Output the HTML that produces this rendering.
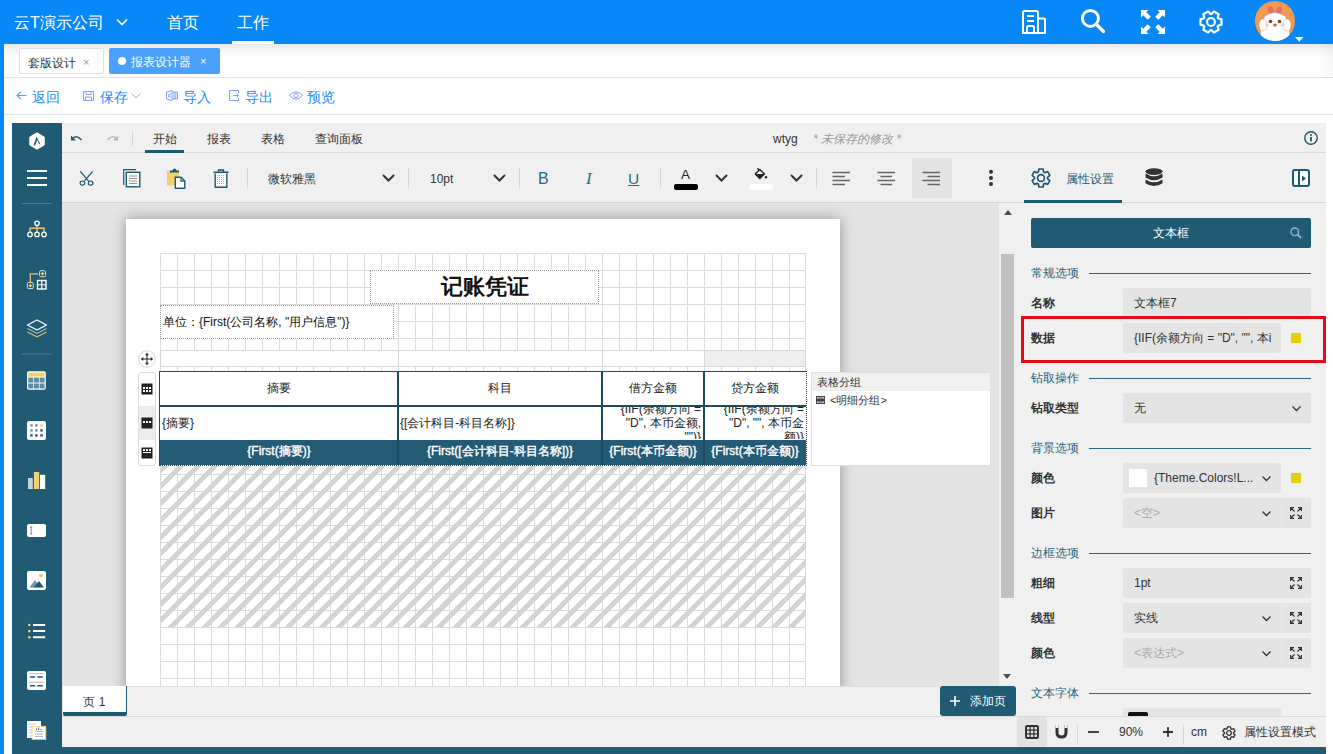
<!DOCTYPE html>
<html><head><meta charset="utf-8">
<style>
*{box-sizing:border-box;margin:0;padding:0}
html,body{width:1333px;height:754px;overflow:hidden;background:#fff;font-family:"Liberation Sans",sans-serif;position:relative}
.a{position:absolute;white-space:nowrap}
svg{position:absolute;overflow:visible}
#hdr{left:0;top:0;width:1333px;height:44px;background:#0888f7;color:#fff}
#lstrip{left:0;top:44px;width:4px;height:710px;background:#0888f7}
#tabbar{left:4px;top:44px;width:1329px;height:34px;background:#fff;border-bottom:1px solid #dfe3ea}
#tabbar:before{content:"";position:absolute;left:0;top:0;right:0;height:14px;background:linear-gradient(rgba(0,0,0,0.09),rgba(0,0,0,0.03) 45%,rgba(0,0,0,0))}
#tabbar:after{content:"";position:absolute;right:0;top:0;width:14px;height:80px;background:linear-gradient(to left,rgba(0,0,0,0.035),rgba(0,0,0,0));-webkit-mask-image:linear-gradient(#000 30%,transparent)}
#actbar{left:4px;top:78px;width:1329px;height:37px;background:#fff;border-bottom:1px solid #dfe3ea}
#side{left:12px;top:123px;width:50px;height:631px;background:#205b73}
#main{left:62px;top:123px;width:1264px;height:624px;background:#f0f0f0}
#bstrip{left:12px;top:747px;width:1314px;height:7px;background:#205b73}
.ht{font-size:16px;color:#fff;top:11.5px;line-height:22px}
.tab{top:48px;height:26px;border-radius:2px;font-size:12px;line-height:28px}
.act{top:88px;font-size:14px;line-height:18px;color:#1d8cf8}
</style></head><body>
<div id="hdr" class="a">
  <div class="a ht" style="left:14px">云T演示公司</div>
  <svg style="left:116px;top:18px" width="12" height="8"><path d="M1 1.5L6 6.5L11 1.5" fill="none" stroke="#fff" stroke-width="1.6"/></svg>
  <div class="a ht" style="left:167px">首页</div>
  <div class="a ht" style="left:237px">工作</div>
  <div class="a" style="left:232px;top:41px;width:42px;height:3px;background:#fff"></div>
  <!-- building -->
  <svg style="left:1022px;top:10px" width="24" height="24" viewBox="0 0 24 24"><path d="M1 23V2.5Q1 1 2.5 1H14.5Q16 1 16 2.5V23M16 8.5H22Q23 8.5 23 9.5V23M0 23H24M5 6H12M5 11H12M5 23V17.5Q5 16 6.5 16H10.5Q12 16 12 17.5V23" fill="none" stroke="#fff" stroke-width="2"/></svg>
  <!-- search -->
  <svg style="left:1081px;top:9px" width="24" height="24" viewBox="0 0 24 24"><circle cx="9.4" cy="9.4" r="8" fill="none" stroke="#fff" stroke-width="3"/><path d="M15.5 15.5L22.5 22.5" stroke="#fff" stroke-width="3.2" stroke-linecap="round"/></svg>
  <!-- fullscreen -->
  <svg style="left:1141px;top:10px" width="24" height="24" viewBox="0 0 24 24" fill="#fff"><path d="M0 0H7.5L5.3 2.2L9.8 6.7L6.7 9.8L2.2 5.3L0 7.5Z"/><path d="M24 0H16.5L18.7 2.2L14.2 6.7L17.3 9.8L21.8 5.3L24 7.5Z"/><path d="M0 24H7.5L5.3 21.8L9.8 17.3L6.7 14.2L2.2 18.7L0 16.5Z"/><path d="M24 24H16.5L18.7 21.8L14.2 17.3L17.3 14.2L21.8 18.7L24 16.5Z"/></svg>
  <!-- gear -->
  <svg style="left:1199px;top:10px" width="24" height="24" viewBox="0 0 24 24"><path d="M19.14 8.40 L22.50 9.20 L22.50 14.80 L19.14 15.60 L18.69 16.39 L19.67 19.69 L14.83 22.49 L12.45 19.99 L11.55 19.99 L9.17 22.49 L4.33 19.69 L5.31 16.39 L4.86 15.60 L1.50 14.80 L1.50 9.20 L4.86 8.40 L5.31 7.61 L4.33 4.31 L9.17 1.51 L11.55 4.01 L12.45 4.01 L14.83 1.51 L19.67 4.31 L18.69 7.61Z" fill="none" stroke="#fff" stroke-width="2.2" stroke-linejoin="round"/><circle cx="12" cy="12" r="3.9" fill="none" stroke="#fff" stroke-width="2"/></svg>
  <!-- avatar -->
  <svg style="left:1255px;top:1px" width="40" height="40" viewBox="0 0 40 40">
    <defs><clipPath id="avc"><circle cx="20" cy="20" r="20"/></clipPath></defs>
    <g clip-path="url(#avc)">
    <rect width="40" height="40" fill="#f39a52"/>
    <ellipse cx="16" cy="9.5" rx="3" ry="4" fill="#e8706a" transform="rotate(-20 16 9.5)"/><ellipse cx="24" cy="9.5" rx="3" ry="4" fill="#e8706a" transform="rotate(20 24 9.5)"/>
    <path d="M6 44Q4 22 10 15Q20 8 30 15Q36 22 34 44Z" fill="#fff" stroke="#b08060" stroke-width="0.4"/>
    <ellipse cx="8" cy="24" rx="4" ry="6" fill="#fff" stroke="#c09070" stroke-width="0.4"/><ellipse cx="32" cy="24" rx="4" ry="6" fill="#fff" stroke="#c09070" stroke-width="0.4"/>
    <circle cx="15.5" cy="20.5" r="1.8" fill="#6a4530"/><circle cx="24.5" cy="20.5" r="1.8" fill="#6a4530"/>
    <ellipse cx="20" cy="24" rx="2" ry="1.6" fill="#e0605a"/>
    <circle cx="12" cy="24" r="1.6" fill="#f8c0c0"/><circle cx="28" cy="24" r="1.6" fill="#f8c0c0"/>
    </g>
  </svg>
  <svg style="left:1295px;top:37px" width="9" height="5"><path d="M0 0H8.5L4.25 4.8Z" fill="#fff"/></svg>
</div>
<div id="lstrip" class="a"></div>
<div id="tabbar" class="a"></div>
<div class="a tab" style="left:19px;width:85px;border:1px solid #dcdfe6;background:#fff;color:#333;padding-left:8px">套版设计<span style="position:absolute;left:63px;top:-1px;color:#999;font-size:11px">×</span></div>
<div class="a tab" style="left:109px;width:111px;background:#4aa0fb;color:#fff;padding-left:22px">报表设计器<span style="position:absolute;left:9px;top:9px;width:8px;height:8px;border-radius:50%;background:#fff"></span><span style="position:absolute;left:91px;top:-1px;font-size:11px">×</span></div>
<div id="actbar" class="a"></div>
<svg style="left:16px;top:91px" width="11" height="9" viewBox="0 0 11 9"><path d="M10.5 4.5H1M5 0.7L1 4.5L5 8.3" fill="none" stroke="#5b9cf8" stroke-width="1.1"/></svg>
<div class="a act" style="left:32px">返回</div>
<svg style="left:83px;top:91px" width="11" height="10" viewBox="0 0 11 10"><path d="M0.5 0.5H10.5V9.5H0.5Z M3 0.5V3.5H8V0.5 M2.5 9.5V6H8.5V9.5" fill="none" stroke="#8a9ef8" stroke-width="1"/></svg>
<div class="a act" style="left:100px">保存</div>
<svg style="left:131px;top:93px" width="10" height="6" viewBox="0 0 10 6"><path d="M0.5 0.5L5 5L9.5 0.5" fill="none" stroke="#8a9ef8" stroke-width="1"/></svg>
<svg style="left:166px;top:90px" width="12" height="11" viewBox="0 0 12 11"><path d="M0.5 2L6 0.5V10.5L0.5 9Z M6 2H11.5V9H6 M2 3.5L4.5 7.5M4.5 3.5L2 7.5 M8 2V9M9.8 2V9" fill="none" stroke="#8a9ef8" stroke-width="1"/></svg>
<div class="a act" style="left:183px">导入</div>
<svg style="left:229px;top:90px" width="10" height="11" viewBox="0 0 10 11"><path d="M9.5 3V0.5H0.5V10.5H9.5V8 M4 5.5H9.5M7.5 3.5L9.5 5.5L7.5 7.5" fill="none" stroke="#8a9ef8" stroke-width="1"/></svg>
<div class="a act" style="left:245px">导出</div>
<svg style="left:289px;top:91px" width="14" height="9" viewBox="0 0 14 9"><path d="M0.5 4.5Q7 -3 13.5 4.5Q7 12 0.5 4.5Z" fill="none" stroke="#8a9ef8" stroke-width="1"/><circle cx="7" cy="4.5" r="2.2" fill="none" stroke="#8a9ef8" stroke-width="1"/></svg>
<div class="a act" style="left:307px">预览</div>
<style>
#side{left:12px;top:123px;width:50px;height:631px;background:#205b73}
#main{left:62px;top:123px;width:1264px;height:624px;background:#f0f0f0}
#bstrip{left:12px;top:747px;width:1314px;height:7px;background:#205b73}
.tt{font-size:12px;color:#333;line-height:16px}
.sep{width:1px;background:#d6d6d6}
.chev{fill:none;stroke:#333;stroke-width:2}
.lbl{left:1031px;font-size:12px;font-weight:bold;color:#333;line-height:16px}
.sec{left:1031px;font-size:12px;color:#2a6580;line-height:16px}
.secl{left:1089px;width:222px;height:1px;background:#2a6580}
.inp{left:1123px;height:30px;background:#e4e4e4;border-radius:2px;font-size:12px;color:#333;line-height:30px;padding-left:11px;overflow:hidden}
.ysq{left:1291px;width:10px;height:10px;background:#e3d000;border-radius:1px}
.cell{font-size:12px;color:#222;line-height:16px}
</style>
<div id="side" class="a"></div>
<div id="main" class="a"></div>
<!-- tab row -->
<div class="a" style="left:62px;top:152px;width:1264px;height:1px;background:#d8d8d8"></div>
<svg style="left:71px;top:134px" width="12" height="9" viewBox="0 0 12 9"><path d="M1.5 4.5Q6 0.5 10.5 6" fill="none" stroke="#1f5a73" stroke-width="1.5"/><path d="M0 1.5V6.5H5Z" fill="#1f5a73"/></svg>
<svg style="left:106px;top:134px" width="12" height="9" viewBox="0 0 12 9"><path d="M10.5 4.5Q6 0.5 1.5 6" fill="none" stroke="#a9bcc6" stroke-width="1.5"/><path d="M12 1.5V6.5H7Z" fill="#a9bcc6"/></svg>
<div class="a sep" style="left:132px;top:131px;height:15px"></div>
<div class="a tt" style="left:153px;top:131px">开始</div>
<div class="a" style="left:145px;top:150px;width:39px;height:3px;background:#1f5a73"></div>
<div class="a tt" style="left:207px;top:131px">报表</div>
<div class="a tt" style="left:261px;top:131px">表格</div>
<div class="a tt" style="left:315px;top:131px">查询面板</div>
<div class="a tt" style="left:773px;top:131px">wtyg</div>
<div class="a tt" style="left:813px;top:131px;color:#999;font-style:italic">* 未保存的修改 *</div>
<svg style="left:1304px;top:131px" width="14" height="14" viewBox="0 0 14 14"><circle cx="7" cy="7" r="6.2" fill="none" stroke="#1f5a73" stroke-width="1.4"/><circle cx="7" cy="4" r="1" fill="#1f5a73"/><path d="M7 6V10.5" stroke="#1f5a73" stroke-width="1.8"/></svg>
<!-- toolbar -->
<div class="a" style="left:62px;top:202px;width:1264px;height:1px;background:#d8d8d8"></div>
<svg style="left:79px;top:171px" width="15" height="15" viewBox="0 0 17 19" preserveAspectRatio="none"><path d="M1.5 0.5L11 13M15.5 0.5L6 13" stroke="#1f5a73" stroke-width="1.5" fill="none"/><circle cx="3.8" cy="15.3" r="2.6" fill="none" stroke="#1f5a73" stroke-width="1.4"/><circle cx="13.2" cy="15.3" r="2.6" fill="none" stroke="#1f5a73" stroke-width="1.4"/></svg>
<svg style="left:123px;top:169px" width="18" height="19" viewBox="0 0 18 19"><path d="M0.7 16V0.7H13" fill="none" stroke="#1f5a73" stroke-width="1.2"/><rect x="3.3" y="3.3" width="13.5" height="14.5" fill="#fff" stroke="#1f5a73" stroke-width="1.4"/><path d="M6 7H14M6 9.5H14M6 12H14M6 14.5H14" stroke="#888" stroke-width="0.9"/></svg>
<svg style="left:167px;top:168px" width="19" height="21" viewBox="0 0 19 21"><rect x="0" y="2.5" width="12" height="15" fill="#f1cf70"/><path d="M3 4.5V2.5H5.5Q6 0.5 7.5 0.5Q9 0.5 9.5 2.5H12V4.5Z" fill="#1f5a73"/><path d="M8.3 9.3H14L17.8 13.1V20.3H8.3Z" fill="#fff" stroke="#1f5a73" stroke-width="1.4"/><path d="M14 9.3V13.1H17.8" fill="none" stroke="#1f5a73" stroke-width="1.2"/></svg>
<svg style="left:213px;top:169px" width="16" height="19" viewBox="0 0 16 19"><path d="M0.5 3.3H15.5" stroke="#1f5a73" stroke-width="1.6"/><path d="M5.5 3V1H10.5V3" fill="none" stroke="#1f5a73" stroke-width="1.4"/><path d="M2.2 4.5V18.2H13.8V4.5" fill="#fff" stroke="#1f5a73" stroke-width="1.4"/><g fill="#bbb"><rect x="4" y="6" width="8" height="10.5" fill="url(#dots)"/></g><defs><pattern id="dots" width="2" height="2" patternUnits="userSpaceOnUse"><rect width="1" height="1" fill="#aaa"/></pattern></defs></svg>
<div class="a sep" style="left:247px;top:168px;height:20px"></div>
<div class="a tt" style="left:268px;top:171px">微软雅黑</div>
<svg style="left:382px;top:174px" width="13" height="8" viewBox="0 0 13 8"><path class="chev" d="M1 1L6.5 6.5L12 1"/></svg>
<div class="a sep" style="left:408px;top:168px;height:20px"></div>
<div class="a tt" style="left:430px;top:171px">10pt</div>
<svg style="left:493px;top:174px" width="13" height="8" viewBox="0 0 13 8"><path class="chev" d="M1 1L6.5 6.5L12 1"/></svg>
<div class="a sep" style="left:519px;top:168px;height:20px"></div>
<div class="a" style="left:538px;top:170px;font-size:16px;color:#246a86;line-height:18px">B</div>
<div class="a" style="left:586px;top:170px;font-size:17px;color:#246a86;line-height:18px;font-family:'Liberation Serif',serif;font-style:italic">I</div>
<div class="a" style="left:628px;top:170px;font-size:15.5px;color:#246a86;line-height:18px;text-decoration:underline">U</div>
<div class="a sep" style="left:660px;top:168px;height:20px"></div>
<div class="a" style="left:681px;top:168px;font-size:13.5px;color:#222;line-height:14px">A</div>
<div class="a" style="left:674px;top:184px;width:24px;height:6px;background:#000;border-radius:2px"></div>
<svg style="left:715px;top:174px" width="13" height="8" viewBox="0 0 13 8"><path class="chev" d="M1 1L6.5 6.5L12 1"/></svg>
<svg style="left:754px;top:168px" width="14" height="12" viewBox="0 0 14 12"><path d="M3.5 0.3L5.3 2.2" stroke="#222" stroke-width="1.3"/><path d="M1.2 6L5.8 1.6L10.4 6L5.8 10.4Z" fill="none" stroke="#222" stroke-width="1.4" stroke-linejoin="round"/><path d="M1.2 6H10.4L5.8 10.4Z" fill="#222"/><circle cx="12" cy="9.3" r="1.2" fill="#222"/></svg>
<div class="a" style="left:749px;top:184px;width:24px;height:6px;background:#fff;border-radius:2px"></div>
<svg style="left:790px;top:174px" width="13" height="8" viewBox="0 0 13 8"><path class="chev" d="M1 1L6.5 6.5L12 1"/></svg>
<div class="a sep" style="left:816px;top:168px;height:20px"></div>
<svg style="left:832px;top:171px" width="19" height="15" viewBox="0 0 19 15" stroke="#666" stroke-width="1.3"><path d="M0.5 1.5H18M0.5 5.5H13M0.5 9.5H18M0.5 13.5H13"/></svg>
<svg style="left:877px;top:171px" width="19" height="15" viewBox="0 0 19 15" stroke="#666" stroke-width="1.3"><path d="M0.5 1.5H18M3.5 5.5H15M0.5 9.5H18M3.5 13.5H15"/></svg>
<div class="a" style="left:912px;top:158px;width:40px;height:40px;background:#e4e4e4;border-radius:2px"></div>
<svg style="left:922px;top:171px" width="19" height="15" viewBox="0 0 19 15" stroke="#666" stroke-width="1.3"><path d="M0.5 1.5H18M5.5 5.5H18M0.5 9.5H18M5.5 13.5H18"/></svg>
<svg style="left:988px;top:169px" width="6" height="18" viewBox="0 0 6 18" fill="#333"><circle cx="3" cy="2.7" r="2"/><circle cx="3" cy="8.9" r="2"/><circle cx="3" cy="15" r="2"/></svg>
<!-- right panel header -->
<svg style="left:1031px;top:168px" width="20" height="20" viewBox="0 0 20 20"><path d="M7.30 3.98 L7.90 1.00 L12.10 1.00 L12.70 3.98 L13.87 4.65 L16.74 3.68 L18.84 7.32 L16.57 9.33 L16.57 10.67 L18.84 12.68 L16.74 16.32 L13.87 15.35 L12.70 16.02 L12.10 19.00 L7.90 19.00 L7.30 16.02 L6.13 15.35 L3.26 16.32 L1.16 12.68 L3.43 10.67 L3.43 9.33 L1.16 7.32 L3.26 3.68 L6.13 4.65Z" fill="none" stroke="#1f5a73" stroke-width="1.7" stroke-linejoin="round"/><circle cx="10" cy="10" r="3.4" fill="none" stroke="#1f5a73" stroke-width="1.7"/></svg>
<div class="a tt" style="left:1066px;top:171px;color:#245b75">属性设置</div>
<div class="a" style="left:1024px;top:200px;width:98px;height:3px;background:#1f5a73"></div>
<svg style="left:1145px;top:168px" width="18" height="19" viewBox="0 0 18 19" fill="#333"><ellipse cx="9" cy="3.6" rx="8.5" ry="3.4"/><path d="M0.5 5.5Q9 11 17.5 5.5V9.5Q9 15 0.5 9.5Z"/><path d="M0.5 11.5Q9 17 17.5 11.5V15.2Q9 21 0.5 15.2Z"/></svg>
<svg style="left:1292px;top:169px" width="18" height="18" viewBox="0 0 18 18"><rect x="1" y="1" width="16" height="16" rx="2" fill="#fff" stroke="#1f5a73" stroke-width="2"/><path d="M7 1V17" stroke="#1f5a73" stroke-width="2"/><path d="M10 6.5L14 9.5L10 12.5Z" fill="#1f5a73"/></svg>
<svg style="left:12px;top:123px" width="50" height="631" viewBox="12 123 50 631">
<!-- logo hexagon -->
<path d="M37 132.8L44.2 137V145L37 149.2L29.8 145V137Z" fill="#fff" stroke="#fff" stroke-width="1" stroke-linejoin="round"/>
<path d="M36.6 136.5L33.5 145.5L35.2 145.3L37.3 139.5L38.8 143.6L40.6 144.8Z" fill="#205b73"/>
<!-- hamburger -->
<path d="M27 171H47M27 178H47M27 185H47" stroke="#fff" stroke-width="2.2"/>
<path d="M22 203.5H52" stroke="#4d7d91" stroke-width="1"/>
<!-- hierarchy -->
<path d="M37 225.8V234M30 234V228.3H44V234" fill="none" stroke="#e5c76a" stroke-width="1.4"/>
<circle cx="37" cy="223.3" r="2.2" fill="#205b73" stroke="#fff" stroke-width="1.3"/>
<circle cx="30" cy="234.4" r="2.2" fill="#205b73" stroke="#fff" stroke-width="1.3"/>
<circle cx="37" cy="234.4" r="2.2" fill="#205b73" stroke="#fff" stroke-width="1.3"/>
<circle cx="44" cy="234.4" r="2.2" fill="#205b73" stroke="#fff" stroke-width="1.3"/>
<!-- grid add -->
<path d="M30.3 282V273.8H38" fill="none" stroke="#e5c76a" stroke-width="1.3"/>
<rect x="39.6" y="270.7" width="6" height="6" rx="1.2" fill="#205b73" stroke="#cfdde3" stroke-width="1"/>
<path d="M42.6 272V275.4M40.9 273.7H44.3" stroke="#f1cf5d" stroke-width="1.3"/>
<rect x="27.3" y="282.6" width="6" height="6" rx="1.2" fill="#205b73" stroke="#cfdde3" stroke-width="1"/>
<path d="M30.3 283.9V287.3M28.6 285.6H32" stroke="#f1cf5d" stroke-width="1.3"/>
<rect x="37.5" y="280.5" width="8.5" height="8.5" fill="none" stroke="#fff" stroke-width="1.4"/>
<path d="M41.75 280.5V289M37.5 284.75H46" stroke="#fff" stroke-width="1.2"/>
<!-- layers -->
<path d="M37 320L46.5 325L37 330L27.5 325Z" fill="none" stroke="#fff" stroke-width="1.3" stroke-linejoin="round"/>
<path d="M27.5 328.5L37 333.5L46.5 328.5" fill="none" stroke="#a7c0cb" stroke-width="1.1"/>
<path d="M27.5 332L37 337L46.5 332" fill="none" stroke="#e5c76a" stroke-width="1.1"/>
<path d="M22 354H52" stroke="#4d7d91" stroke-width="1"/>
<!-- table -->
<rect x="27" y="371.3" width="18.8" height="18.5" rx="1.8" fill="#fff"/>
<rect x="28.2" y="372.5" width="16.4" height="4" fill="#f1cf70"/>
<g fill="#5f8ea0"><rect x="28.2" y="377.6" width="5" height="5"/><rect x="33.9" y="377.6" width="5" height="5"/><rect x="39.6" y="377.6" width="5" height="5"/><rect x="28.2" y="383.5" width="5" height="5"/><rect x="33.9" y="383.5" width="5" height="5"/><rect x="39.6" y="383.5" width="5" height="5"/></g>
<!-- matrix -->
<rect x="27" y="421" width="19" height="19" rx="2" fill="#fff"/>
<g fill="#6b94a5"><rect x="30.3" y="424.2" width="2.4" height="2.4"/><rect x="35.2" y="424.2" width="2.4" height="2.4"/><rect x="30.3" y="429.2" width="2.4" height="2.4"/><rect x="35.2" y="429.2" width="2.4" height="2.4"/></g>
<rect x="40.3" y="424.2" width="2.4" height="2.4" fill="#f1cf70"/>
<g fill="#1f5a73"><rect x="40.3" y="429.2" width="2.4" height="2.4"/><rect x="30.3" y="434.2" width="2.4" height="2.4"/><rect x="35.2" y="434.2" width="2.4" height="2.4"/><rect x="40.3" y="434.2" width="2.4" height="2.4"/></g>
<!-- chart -->
<rect x="28" y="478" width="4.8" height="11" fill="#c5d4da"/>
<rect x="33.9" y="472" width="5.3" height="17" fill="#f1d274"/>
<rect x="40" y="474.8" width="5.2" height="14.2" fill="#fff"/>
<!-- textbox -->
<rect x="27" y="524" width="19" height="13" rx="2" fill="#fff"/>
<path d="M30 527H32.3M31.15 527V534M30 534H32.3" stroke="#777" stroke-width="0.9"/>
<!-- image -->
<rect x="27" y="571" width="19" height="19" rx="2" fill="#fff"/>
<circle cx="40.9" cy="575.6" r="2" fill="#f1cf70"/>
<path d="M29.5 587.5L35 580L37.5 583.5L34.5 587.5Z" fill="#6d97a8"/>
<path d="M33.5 587.5L39 581L44 587.5Z" fill="#1f5a73"/>
<!-- list -->
<g fill="#f1cf5d"><circle cx="29.3" cy="625" r="1.3"/><circle cx="29.3" cy="631" r="1.3"/><circle cx="29.3" cy="637.2" r="1.3"/></g>
<path d="M33 625H45.2M33 631H45.2M33 637.2H45.2" stroke="#fff" stroke-width="2"/>
<!-- form -->
<rect x="27" y="671" width="19" height="19" rx="2" fill="#fff"/>
<path d="M29 673.7H44M29 682.3H44" stroke="#aaa" stroke-width="0.8"/>
<path d="M30 677H35.2M37.3 677H42.8M30 685.8H35.2M37.3 685.8H42.8" stroke="#1f5a73" stroke-width="1.6"/>
<!-- subreport -->
<rect x="27" y="721" width="14" height="17" fill="#fff"/>
<path d="M28.5 724H36M28.5 727H33M28.5 730H33M28.5 733H33M28.5 736H33" stroke="#bbb" stroke-width="0.7"/>
<rect x="32" y="726.3" width="13.8" height="13.2" fill="#fff" stroke="#f0cc5a" stroke-width="1.2" stroke-dasharray="1.3 0.9"/>
<path d="M35 731.5H43M35 734H43M35 736.5H43" stroke="#999" stroke-width="0.7"/>
<path d="M36.5 730.2V728.5M38.7 730.2V727.5M40.9 730.2V729" stroke="#1f5a73" stroke-width="0.9"/>
</svg>
<!-- canvas -->
<div class="a" style="left:62px;top:203px;width:937px;height:483px;background:#e4e4e4;overflow:hidden">
  <div class="a" style="left:64px;top:16px;width:714px;height:500px;background:#fff;box-shadow:0 0 14px rgba(0,0,0,0.35)"></div>
</div>
<div class="a" style="left:160px;top:253px;width:646px;height:433px;background-color:#fff;background-image:linear-gradient(to right,#dcdcdc 1px,transparent 1px),linear-gradient(to bottom,#dcdcdc 1px,transparent 1px);background-size:17px 17px;border-right:1px solid #dcdcdc"></div>
<!-- title box -->
<div class="a" style="left:370px;top:270px;width:229px;height:34px;background:#fff;border:1px dotted #999;font-size:21.5px;font-weight:bold;color:#111;text-align:center;line-height:32px">记账凭证</div>
<div class="a" style="left:160px;top:305px;width:234px;height:34px;background:#fff;border:1px dotted #999;font-size:12px;color:#111;line-height:32px;padding-left:2px">单位：{First(公司名称, "用户信息")}</div>
<!-- handle row -->
<div class="a" style="left:160px;top:350px;width:239px;height:17px;background:#fff;border:1px solid #d6d6d6;border-radius:2px"></div>
<div class="a" style="left:398px;top:350px;width:205px;height:17px;background:#fff;border:1px solid #d6d6d6;border-radius:2px"></div>
<div class="a" style="left:602px;top:350px;width:103px;height:17px;background:#fff;border:1px solid #d6d6d6;border-radius:2px"></div>
<div class="a" style="left:704px;top:350px;width:102px;height:17px;background:#efefef;border:1px solid #d6d6d6;border-radius:2px"></div>
<svg style="left:138px;top:350px" width="18" height="18" viewBox="0 0 18 18"><circle cx="9" cy="9" r="8.3" fill="#fff" stroke="#ccc" stroke-width="0.8"/><path d="M9 3.5V14.5M3.5 9H14.5" stroke="#222" stroke-width="1"/><path d="M9 3L7 5.2H11Z M9 15L7 12.8H11Z M3 9L5.2 7V11Z M15 9L12.8 7V11Z" fill="#222"/></svg>
<!-- row handles -->
<div class="a" style="left:138px;top:372px;width:18px;height:94px;background:#fff;border:1px solid #ddd;border-radius:3px"></div>
<div class="a" style="left:139px;top:406px;width:16px;height:34px;background:#ececec"></div>
<svg style="left:141px;top:383px" width="12" height="12" viewBox="0 0 12 12"><rect x="0.5" y="0.5" width="11" height="11" fill="#222"/><g fill="#fff"><rect x="2" y="4" width="2" height="2"/><rect x="5" y="4" width="2" height="2"/><rect x="8" y="4" width="2" height="2"/><rect x="2" y="7" width="2" height="2"/><rect x="5" y="7" width="2" height="2"/><rect x="8" y="7" width="2" height="2"/></g></svg>
<svg style="left:141px;top:417px" width="12" height="12" viewBox="0 0 12 12"><rect x="0.5" y="0.5" width="11" height="11" fill="#222"/><g fill="#fff"><rect x="2" y="4" width="2" height="2"/><rect x="5" y="4" width="2" height="2"/><rect x="8" y="4" width="2" height="2"/></g></svg>
<svg style="left:141px;top:447px" width="12" height="12" viewBox="0 0 12 12"><rect x="0.5" y="0.5" width="11" height="11" fill="#222"/><g fill="#fff"><rect x="2" y="2" width="2" height="2"/><rect x="5" y="2" width="2" height="2"/><rect x="8" y="2" width="2" height="2"/><rect x="2" y="5" width="8" height="1"/></g></svg>
<!-- table -->
<div class="a" style="left:159px;top:371px;width:648px;height:95px;border:1px dotted #1c4a5e"></div>
<div class="a" style="left:160px;top:372px;width:646px;height:33px;background:#fff"></div>
<div class="a" style="left:159px;top:371px;width:648px;height:1px;background:#1c4a5e"></div>
<div class="a" style="left:160px;top:405px;width:646px;height:2px;background:#1c4a5e"></div>
<div class="a" style="left:160px;top:407px;width:646px;height:33px;background:#fff"></div>
<div class="a" style="left:160px;top:440px;width:646px;height:25px;background:#245b74"></div>
<div class="a" style="left:159px;top:371px;width:1px;height:94px;background:#1c4a5e"></div>
<div class="a" style="left:397px;top:372px;width:2px;height:93px;background:#1c4a5e"></div>
<div class="a" style="left:601px;top:372px;width:2px;height:93px;background:#1c4a5e"></div>
<div class="a" style="left:703px;top:372px;width:2px;height:93px;background:#1c4a5e"></div>
<div class="a cell" style="left:160px;top:380px;width:238px;text-align:center">摘要</div>
<div class="a cell" style="left:398px;top:380px;width:204px;text-align:center">科目</div>
<div class="a cell" style="left:602px;top:380px;width:102px;text-align:center">借方金额</div>
<div class="a cell" style="left:704px;top:380px;width:102px;text-align:center">贷方金额</div>
<div class="a cell" style="left:162px;top:415px">{摘要}</div>
<div class="a cell" style="left:400px;top:415px">{[会计科目-科目名称]}</div>
<div class="a" style="left:603px;top:407px;width:98px;height:32px;overflow:hidden">
  <div class="cell" style="position:absolute;right:0;top:-5px;text-align:right;line-height:14px">{IIF(余额方向 =<br>"D", 本币金额,<br>"")}</div></div>
<div class="a" style="left:705px;top:407px;width:99px;height:32px;overflow:hidden">
  <div class="cell" style="position:absolute;right:0;top:-5px;text-align:right;line-height:14px">{IIF(余额方向 =<br>"D", "", 本币金<br>额)}</div></div>
<div class="a cell" style="left:160px;top:443px;width:238px;text-align:center;color:#fff;-webkit-text-stroke:0.4px #fff">{First(摘要)}</div>
<div class="a cell" style="left:398px;top:443px;width:204px;text-align:center;color:#fff;-webkit-text-stroke:0.4px #fff">{First([会计科目-科目名称])}</div>
<div class="a cell" style="left:602px;top:443px;width:102px;text-align:center;color:#fff;-webkit-text-stroke:0.4px #fff">{First(本币金额)}</div>
<div class="a cell" style="left:704px;top:443px;width:102px;text-align:center;color:#fff;-webkit-text-stroke:0.4px #fff">{First(本币金额)}</div>
<!-- hatched -->
<div class="a" style="left:160px;top:466px;width:646px;height:161px;background-image:repeating-linear-gradient(135deg,#d4d4d4 0,#d4d4d4 5px,transparent 5px,transparent 11.85px);background-position:1px 0"></div>
<!-- group panel -->
<div class="a" style="left:811px;top:372px;width:180px;height:94px;background:#fff;border:1px solid #e0e0e0"></div>
<div class="a" style="left:812px;top:373px;width:178px;height:18px;background:#f0f0f0"></div>
<div class="a cell" style="left:817px;top:374px;color:#333;font-size:11px">表格分组</div>
<svg style="left:816px;top:396px" width="9" height="8" viewBox="0 0 9 8"><rect width="9" height="8" fill="#444"/><g fill="#ccc"><rect x="1" y="1" width="2" height="1.5"/><rect x="3.5" y="1" width="2" height="1.5"/><rect x="6" y="1" width="2" height="1.5"/><rect x="1" y="5.5" width="2" height="1.5"/><rect x="3.5" y="5.5" width="2" height="1.5"/><rect x="6" y="5.5" width="2" height="1.5"/></g></svg>
<div class="a cell" style="left:830px;top:392px;color:#333;font-size:11px">&lt;明细分组&gt;</div>
<!-- scrollbar -->
<div class="a" style="left:999px;top:203px;width:17px;height:483px;background:#f0f0f0"></div>
<div class="a" style="left:1001px;top:254px;width:13px;height:344px;background:#c1c1c1"></div>
<svg style="left:1003.5px;top:210px" width="9" height="6"><path d="M0 5H8L4 0Z" fill="#505050"/></svg>
<svg style="left:1003px;top:674px" width="9" height="6"><path d="M0 0H8L4 5Z" fill="#505050"/></svg>
<!-- page tabs row -->
<div class="a" style="left:62px;top:686px;width:937px;height:1px;background:#dedede"></div>
<div class="a" style="left:62px;top:716px;width:1264px;height:1px;background:#d8d8d8"></div>
<div class="a" style="left:63px;top:686px;width:64px;height:30px;background:#fff;border-right:1px solid #1f5a73;border-bottom:4px solid #1f5a73;border-radius:0 0 2px 2px;font-size:12px;color:#333;line-height:32px;text-align:center">页 1</div>
<div class="a" style="left:940px;top:686px;width:76px;height:30px;background:#205b73;border-radius:3px;color:#fff;font-size:12px;line-height:30px"><svg style="left:10px;top:10px" width="10" height="10"><path d="M5 0V10M0 5H10" stroke="#fff" stroke-width="1.6"/></svg><span style="position:absolute;left:30px">添加页</span></div>
<!-- status bar -->
<div class="a" style="left:1017px;top:717px;width:30px;height:30px;background:#e2e2e2"></div>
<svg style="left:1025px;top:725px" width="14" height="14" viewBox="0 0 14 14"><rect x="0" y="0" width="14" height="14" rx="2" fill="#333"/><g fill="#e2e2e2"><rect x="2" y="2" width="2.5" height="2.5"/><rect x="5.75" y="2" width="2.5" height="2.5"/><rect x="9.5" y="2" width="2.5" height="2.5"/><rect x="2" y="5.75" width="2.5" height="2.5"/><rect x="5.75" y="5.75" width="2.5" height="2.5"/><rect x="9.5" y="5.75" width="2.5" height="2.5"/><rect x="2" y="9.5" width="2.5" height="2.5"/><rect x="5.75" y="9.5" width="2.5" height="2.5"/><rect x="9.5" y="9.5" width="2.5" height="2.5"/></g></svg>
<svg style="left:1055px;top:725px" width="13" height="14" viewBox="0 0 13 14"><path d="M2 0V7.5Q2 12 6.5 12Q11 12 11 7.5V0" fill="none" stroke="#333" stroke-width="3"/><path d="M0.5 0H3.5V3H0.5Z M9.5 0H12.5V3H9.5Z" fill="#f0f0f0"/></svg>
<div class="a sep" style="left:1077px;top:725px;height:20px"></div>
<div class="a" style="left:1088px;top:731px;width:11px;height:2px;background:#444"></div>
<div class="a tt" style="left:1119px;top:724px">90%</div>
<svg style="left:1163px;top:727px" width="10" height="10"><path d="M5 0V10M0 5H10" stroke="#333" stroke-width="1.8"/></svg>
<div class="a sep" style="left:1183px;top:725px;height:20px"></div>
<div class="a tt" style="left:1191px;top:724px">cm</div>
<svg style="left:1222px;top:726px" width="14" height="14" viewBox="0 0 14 14"><path d="M5.10 2.92 L5.50 0.80 L8.50 0.80 L8.90 2.92 L9.58 3.31 L11.62 2.60 L13.12 5.20 L11.48 6.61 L11.48 7.39 L13.12 8.80 L11.62 11.40 L9.58 10.69 L8.90 11.08 L8.50 13.20 L5.50 13.20 L5.10 11.08 L4.42 10.69 L2.38 11.40 L0.88 8.80 L2.52 7.39 L2.52 6.61 L0.88 5.20 L2.38 2.60 L4.42 3.31Z" fill="none" stroke="#333" stroke-width="1.3" stroke-linejoin="round"/><circle cx="7" cy="7" r="2.3" fill="none" stroke="#333" stroke-width="1.3"/></svg>
<div class="a tt" style="left:1244px;top:724px">属性设置模式</div>
<!-- right panel content -->
<div class="a" style="left:1016px;top:203px;width:310px;height:513px;overflow:hidden">
<div class="a" style="left:15px;top:15px;width:280px;height:30px;background:#205b73;border-radius:2px;color:#fff;font-size:12px;text-align:center;line-height:31px">文本框<svg style="left:259px;top:9px" width="12" height="12" viewBox="0 0 12 12"><circle cx="4.8" cy="4.8" r="3.8" fill="none" stroke="#8fb3c3" stroke-width="1.4"/><path d="M7.5 7.5L11 11" stroke="#8fb3c3" stroke-width="1.8"/></svg></div>
</div>
<div class="a sec" style="top:265px">常规选项</div><div class="a secl" style="top:273px"></div>
<div class="a lbl" style="top:295px">名称</div><div class="a inp" style="top:288px;width:188px">文本框7</div>
<div class="a" style="left:1021px;top:316px;width:305px;height:47px;border:3px solid #e10a17"></div>
<div class="a lbl" style="top:330px">数据</div><div class="a inp" style="top:323px;width:158px;padding-right:6px">{IIF(余额方向 = "D", "", 本i</div>
<div class="a ysq" style="top:333px"></div>
<div class="a sec" style="top:370px">钻取操作</div><div class="a secl" style="top:378px"></div>
<div class="a lbl" style="top:400px">钻取类型</div><div class="a inp" style="top:393px;width:188px">无</div>
<svg style="left:1292px;top:406px" width="9" height="6"><path d="M0.5 0.5L4.5 4.5L8.5 0.5" fill="none" stroke="#333" stroke-width="1.3"/></svg>
<div class="a sec" style="top:440px">背景选项</div><div class="a secl" style="top:448px"></div>
<div class="a lbl" style="top:470px">颜色</div><div class="a inp" style="top:463px;width:158px;padding-left:31px">{Theme.Colors!L...</div>
<div class="a" style="left:1129px;top:469px;width:18px;height:18px;background:#fff"></div>
<svg style="left:1262px;top:476px" width="9" height="6"><path d="M0.5 0.5L4.5 4.5L8.5 0.5" fill="none" stroke="#333" stroke-width="1.3"/></svg>
<div class="a ysq" style="top:473px"></div>
<div class="a lbl" style="top:505px">图片</div><div class="a inp" style="top:498px;width:188px;color:#aaa">&lt;空&gt;</div>
<div class="a" style="left:1281px;top:498px;width:1px;height:30px;background:#e9e9e9"></div>
<svg style="left:1262px;top:511px" width="9" height="6"><path d="M0.5 0.5L4.5 4.5L8.5 0.5" fill="none" stroke="#333" stroke-width="1.3"/></svg>
<div class="a sec" style="top:545px">边框选项</div><div class="a secl" style="top:553px"></div>
<div class="a lbl" style="top:575px">粗细</div><div class="a inp" style="top:568px;width:188px">1pt</div>
<div class="a lbl" style="top:610px">线型</div><div class="a inp" style="top:603px;width:188px">实线</div>
<div class="a" style="left:1281px;top:603px;width:1px;height:30px;background:#e9e9e9"></div>
<svg style="left:1262px;top:616px" width="9" height="6"><path d="M0.5 0.5L4.5 4.5L8.5 0.5" fill="none" stroke="#333" stroke-width="1.3"/></svg>
<div class="a lbl" style="top:645px">颜色</div><div class="a inp" style="top:638px;width:188px;color:#aaa">&lt;表达式&gt;</div>
<div class="a" style="left:1281px;top:638px;width:1px;height:30px;background:#e9e9e9"></div>
<svg style="left:1262px;top:651px" width="9" height="6"><path d="M0.5 0.5L4.5 4.5L8.5 0.5" fill="none" stroke="#333" stroke-width="1.3"/></svg>
<div class="a sec" style="top:685px">文本字体</div><div class="a secl" style="top:693px"></div>
<div class="a" style="left:1123px;top:708px;width:158px;height:8px;background:#e4e4e4;border-radius:2px 2px 0 0"></div>
<div class="a" style="left:1128px;top:712px;width:20px;height:4px;background:#111;border-radius:2px 2px 0 0"></div>
<svg style="left:1290px;top:507px" width="12" height="12" viewBox="0 0 12 12" fill="none" stroke="#333" stroke-width="1.2"><path d="M0.6 4V0.6H4M8 0.6H11.4V4M11.4 8V11.4H8M4 11.4H0.6V8M0.6 0.6L4.5 4.5M11.4 0.6L7.5 4.5M11.4 11.4L7.5 7.5M0.6 11.4L4.5 7.5"/></svg>
<svg style="left:1290px;top:577px" width="12" height="12" viewBox="0 0 12 12" fill="none" stroke="#333" stroke-width="1.2"><path d="M0.6 4V0.6H4M8 0.6H11.4V4M11.4 8V11.4H8M4 11.4H0.6V8M0.6 0.6L4.5 4.5M11.4 0.6L7.5 4.5M11.4 11.4L7.5 7.5M0.6 11.4L4.5 7.5"/></svg>
<svg style="left:1290px;top:612px" width="12" height="12" viewBox="0 0 12 12" fill="none" stroke="#333" stroke-width="1.2"><path d="M0.6 4V0.6H4M8 0.6H11.4V4M11.4 8V11.4H8M4 11.4H0.6V8M0.6 0.6L4.5 4.5M11.4 0.6L7.5 4.5M11.4 11.4L7.5 7.5M0.6 11.4L4.5 7.5"/></svg>
<svg style="left:1290px;top:647px" width="12" height="12" viewBox="0 0 12 12" fill="none" stroke="#333" stroke-width="1.2"><path d="M0.6 4V0.6H4M8 0.6H11.4V4M11.4 8V11.4H8M4 11.4H0.6V8M0.6 0.6L4.5 4.5M11.4 0.6L7.5 4.5M11.4 11.4L7.5 7.5M0.6 11.4L4.5 7.5"/></svg>
<div id="bstrip" class="a"></div></body></html>
